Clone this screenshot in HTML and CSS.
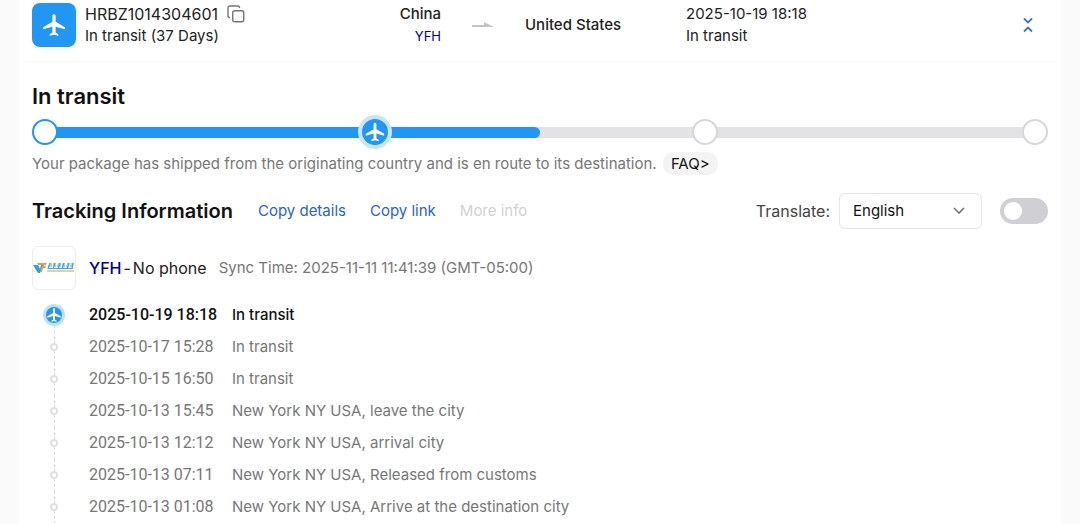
FILE: index.html
```html
<!DOCTYPE html>
<html lang="en">
<head>
    <meta charset="UTF-8">
    <meta name="viewport" content="width=device-width, initial-scale=1.0">
    <title>Package Tracking</title>
    <link rel="stylesheet" href="styles.css">
</head>
<body>
    <svg width="0" height="0" class="sprite" aria-hidden="true">
        <symbol id="plane" viewBox="0 0 24 24">
            <path d="M22 16v-2l-8.5-5V3.5c0-.83-.67-1.5-1.5-1.5s-1.5.67-1.5 1.5V9L2 14v2l8.5-2.5V19L8 20.5V22l4-1 4 1v-1.5L13.5 19v-5.5L22 16z" fill="#fff"/>
        </symbol>
    </svg>

    <main class="panel">
        <header class="summary">
            <div class="package">
                <div class="package-icon"><svg width="26" height="26"><use href="#plane"/></svg></div>
                <div>
                    <div class="number">HRBZ1014304601
                        <button class="icon-button" aria-label="Copy number">
                            <svg width="18" height="18" viewBox="0 0 18 18" fill="none" stroke="#777" stroke-width="1.4">
                                <rect x="5.7" y="5.7" width="11" height="11" rx="2"/>
                                <path d="M3 12.5h-.5A1.5 1.5 0 0 1 1 11V2.800A1.800 1.800 0 0 1 2.800 1H11a1.500 1.500 0 0 1 1.500 1.500V3"/>
                            </svg>
                        </button>
                    </div>
                    <div>In transit (37 Days)</div>
                </div>
            </div>
            <div class="origin">
                <div class="country">China</div>
                <a href="#" class="carrier-small">YFH</a>
            </div>
            <svg class="arrow" width="22" height="6" viewBox="0 0 22 6"><path d="M0 3h12V0l10 5H0z" fill="#c4c4c4"/></svg>
            <div class="country">United States</div>
            <div class="latest">
                <div>2025-10-19 18:18</div>
                <div>In transit</div>
            </div>
            <button class="icon-button collapse" aria-label="Collapse">
                <svg width="10" height="16" viewBox="0 0 10 16" fill="none" stroke="#3b73c9" stroke-width="1.8">
                    <path d="M1 1.500l4 4 4-4M1 14.500l4-4 4 4"/>
                </svg>
            </button>
        </header>

        <section class="status">
            <h2>In transit</h2>
            <div class="progress">
                <div class="track"><div class="fill"></div></div>
                <div class="steps">
                    <span class="step done"></span>
                    <span class="step current"><svg width="22" height="22"><use href="#plane"/></svg></span>
                    <span class="step"></span>
                    <span class="step"></span>
                </div>
            </div>
            <p class="description">Your package has shipped from the originating country and is en route to its destination. <a href="#" class="faq">FAQ&gt;</a></p>
        </section>

        <section>
            <div class="toolbar">
                <h2>Tracking Information</h2>
                <button class="link-button">Copy details</button>
                <button class="link-button">Copy link</button>
                <button class="link-button" disabled>More info</button>
                <label class="translate" for="language">Translate:</label>
                <select id="language">
                    <option>English</option>
                </select>
                <input type="checkbox" class="switch" aria-label="Translate tracking details">
            </div>

            <div class="carrier">
                <div class="carrier-logo">
                    <svg width="42" height="12" viewBox="0 0 42 12">
                        <path d="M0 3h5l2 4 1-4h3L7 11H5z" fill="#2ba3e0"/>
                        <path d="M4 1h10l-1 2H5zM9 4h4l-1 2h-2l-1 4H7z" fill="#f09a4a"/>
                        <path d="M16 2h3M15 4h4M17 1l-2 6M20 2h3M20 4h3M22 1l-2 6M25 2h3M24 4h4M27 1l-2 6M29 2h3M29 4h3M31 1l-2 6M34 2h3M33 4h3M36 1l-2 6M38 2h3M37 4h3M40 1l-1 6M15 6.500h25" stroke="#38a9e4" stroke-width="1.200" fill="none"/>
                        <path d="M14 9h27" stroke="#f3b583" stroke-width="1.500"/>
                    </svg>
                </div>
                <a href="#">YFH</a><span class="dash">-</span><span>No phone</span>
                <span class="sync">Sync Time: 2025-11-11 11:41:39 (GMT-05:00)</span>
            </div>

            <ol class="timeline">
                <li class="active"><span class="marker"><i><svg width="16" height="16"><use href="#plane"/></svg></i></span><time>2025-10-19 18:18</time><span>In transit</span></li>
                <li><span class="marker"><i></i></span><time>2025-10-17 15:28</time><span>In transit</span></li>
                <li><span class="marker"><i></i></span><time>2025-10-15 16:50</time><span>In transit</span></li>
                <li><span class="marker"><i></i></span><time>2025-10-13 15:45</time><span>New York NY USA, leave the city</span></li>
                <li><span class="marker"><i></i></span><time>2025-10-13 12:12</time><span>New York NY USA, arrival city</span></li>
                <li><span class="marker"><i></i></span><time>2025-10-13 07:11</time><span>New York NY USA, Released from customs</span></li>
                <li><span class="marker"><i></i></span><time>2025-10-13 01:08</time><span>New York NY USA, Arrive at the destination city</span></li>
            </ol>
        </section>
    </main>
</body>
</html>
```
FILE: styles.css
```css
* {
    box-sizing: border-box;
}
body {
    margin: 0;
    background-color: #fafafa;
    font-family: Inter, Roboto, sans-serif;
    font-size: 15px;
    line-height: 22px;
    color: #222;
}
h2 {
    margin: 0;
    font-size: 22px;
    font-weight: 600;
    line-height: 28px;
    color: #111;
}
a {
    color: #00008b;
    text-decoration: none;
}
button {
    padding: 0;
    border: none;
    background: none;
    font: inherit;
    cursor: pointer;
}
svg {
    display: block;
}
.sprite {
    position: absolute;
}
.panel {
    min-height: 100vh;
    margin: 0 19px;
    padding: 0 13px;
    background-color: white;
}

/* summary row */
.summary {
    display: grid;
    grid-template-columns: 300fr 109fr 84fr 161fr 330fr 24px;
    align-items: center;
    height: 62px;
    padding: 0 16px 11px 8px;
    margin: 0 -8px;
    border-bottom: 1px solid #f7f7f7;
}
.package {
    display: flex;
    align-items: center;
    gap: 9px;
    white-space: nowrap;
}
.package-icon {
    display: grid;
    place-items: center;
    width: 44px;
    height: 44px;
    border-radius: 8px;
    background-color: #2196f3;
}
.number {
    display: flex;
    align-items: center;
    gap: 9px;
    font-size: 16px;
}
.origin {
    text-align: right;
}
.country {
    font-weight: 500;
}
.carrier-small {
    display: block;
    font-size: 13px;
}
.arrow {
    justify-self: center;
}
.collapse {
    justify-self: center;
}

/* progress */
.status {
    padding: 20px 0 19px;
}
.progress {
    display: grid;
    align-items: center;
    height: 44px;
}
.track,
.steps {
    grid-area: 1 / 1;
}
.track {
    height: 11px;
    margin: 0 8px;
    background-color: #e3e3e6;
}
.fill {
    width: 50%;
    height: 100%;
    border-radius: 0 6px 6px 0;
    background-color: #2196f3;
}
.steps {
    display: flex;
    justify-content: space-between;
}
.step {
    display: grid;
    place-items: center;
    width: 26px;
    height: 26px;
    border: 2px solid #d8d8da;
    border-radius: 50%;
    background-color: white;
}
.step.done {
    border-color: #2196f3;
}
.step.current {
    border-color: #2196f3;
    background-color: #2196f3;
    box-shadow: 0 0 0 4px #c9e5fc;
}
.description {
    margin: 0;
    line-height: 20px;
    color: #777;
}
.faq {
    margin-left: 2px;
    padding: 2px 8px;
    border-radius: 10px;
    background-color: #f4f4f4;
    color: #111;
}

/* tracking toolbar */
.toolbar {
    display: flex;
    align-items: center;
}
.toolbar h2 {
    margin-right: 25px;
    font-size: 20px;
}
.link-button {
    margin-right: 24px;
    color: #2c63c4;
}
.link-button:disabled {
    color: #d2d2d2;
}
.translate {
    margin-left: auto;
    margin-right: 9px;
    font-size: 16px;
    color: #444;
}
select {
    appearance: none;
    width: 143px;
    height: 36px;
    padding: 0 13px;
    border: 1px solid #e6e6e6;
    border-radius: 6px;
    background: white url("data:image/svg+xml,%3Csvg xmlns='http://www.w3.org/2000/svg' width='12' height='8' fill='none' stroke='%23777' stroke-width='1.6'%3E%3Cpath d='M1 1l5 5 5-5'/%3E%3C/svg%3E") no-repeat right 16px center;
    font: inherit;
    color: #111;
}
.switch {
    appearance: none;
    width: 48px;
    height: 26px;
    margin: 0 0 0 18px;
    padding: 4px;
    border-radius: 13px;
    background-color: #d0d0d4;
}
.switch::before {
    content: "";
    display: block;
    width: 18px;
    height: 18px;
    border-radius: 50%;
    background-color: white;
}
.switch:checked {
    background-color: #2196f3;
}
.switch:checked::before {
    margin-left: auto;
}

/* carrier */
.carrier {
    display: flex;
    align-items: center;
    padding: 17px 0 9px;
    font-size: 16px;
}
.carrier a {
    font-weight: 500;
}
.carrier-logo {
    display: grid;
    place-items: center;
    width: 44px;
    height: 44px;
    margin-right: 13px;
    border: 1px solid #eee;
    border-radius: 6px;
}
.dash {
    margin: 0 2px;
}
.sync {
    margin-left: 12px;
    font-size: 15px;
    color: #777;
}

/* timeline */
.timeline {
    margin: 0;
    padding: 0;
    list-style: none;
    color: #777;
}
.timeline li {
    display: grid;
    grid-template-columns: 44px 130px 1fr;
    column-gap: 13px;
    align-items: center;
    height: 32px;
}
.timeline time {
    font-family: Roboto, sans-serif;
    font-size: 16px;
}
.timeline .active {
    font-weight: 500;
    color: #111;
}
.marker {
    display: grid;
    place-items: center;
    height: 100%;
    background: repeating-linear-gradient(#ddd 0 3px, transparent 3px 5px) no-repeat center / 1px 100%;
}
.marker i {
    width: 8px;
    height: 8px;
    border: 2px solid #e0e0e0;
    border-radius: 50%;
    background-color: white;
}
.active .marker {
    background-position: center bottom;
    background-size: 1px 50%;
}
.active .marker i {
    display: grid;
    place-items: center;
    width: 16px;
    height: 16px;
    border: none;
    background-color: #2196f3;
    box-shadow: 0 0 0 3px #bfe1fb;
}
```
